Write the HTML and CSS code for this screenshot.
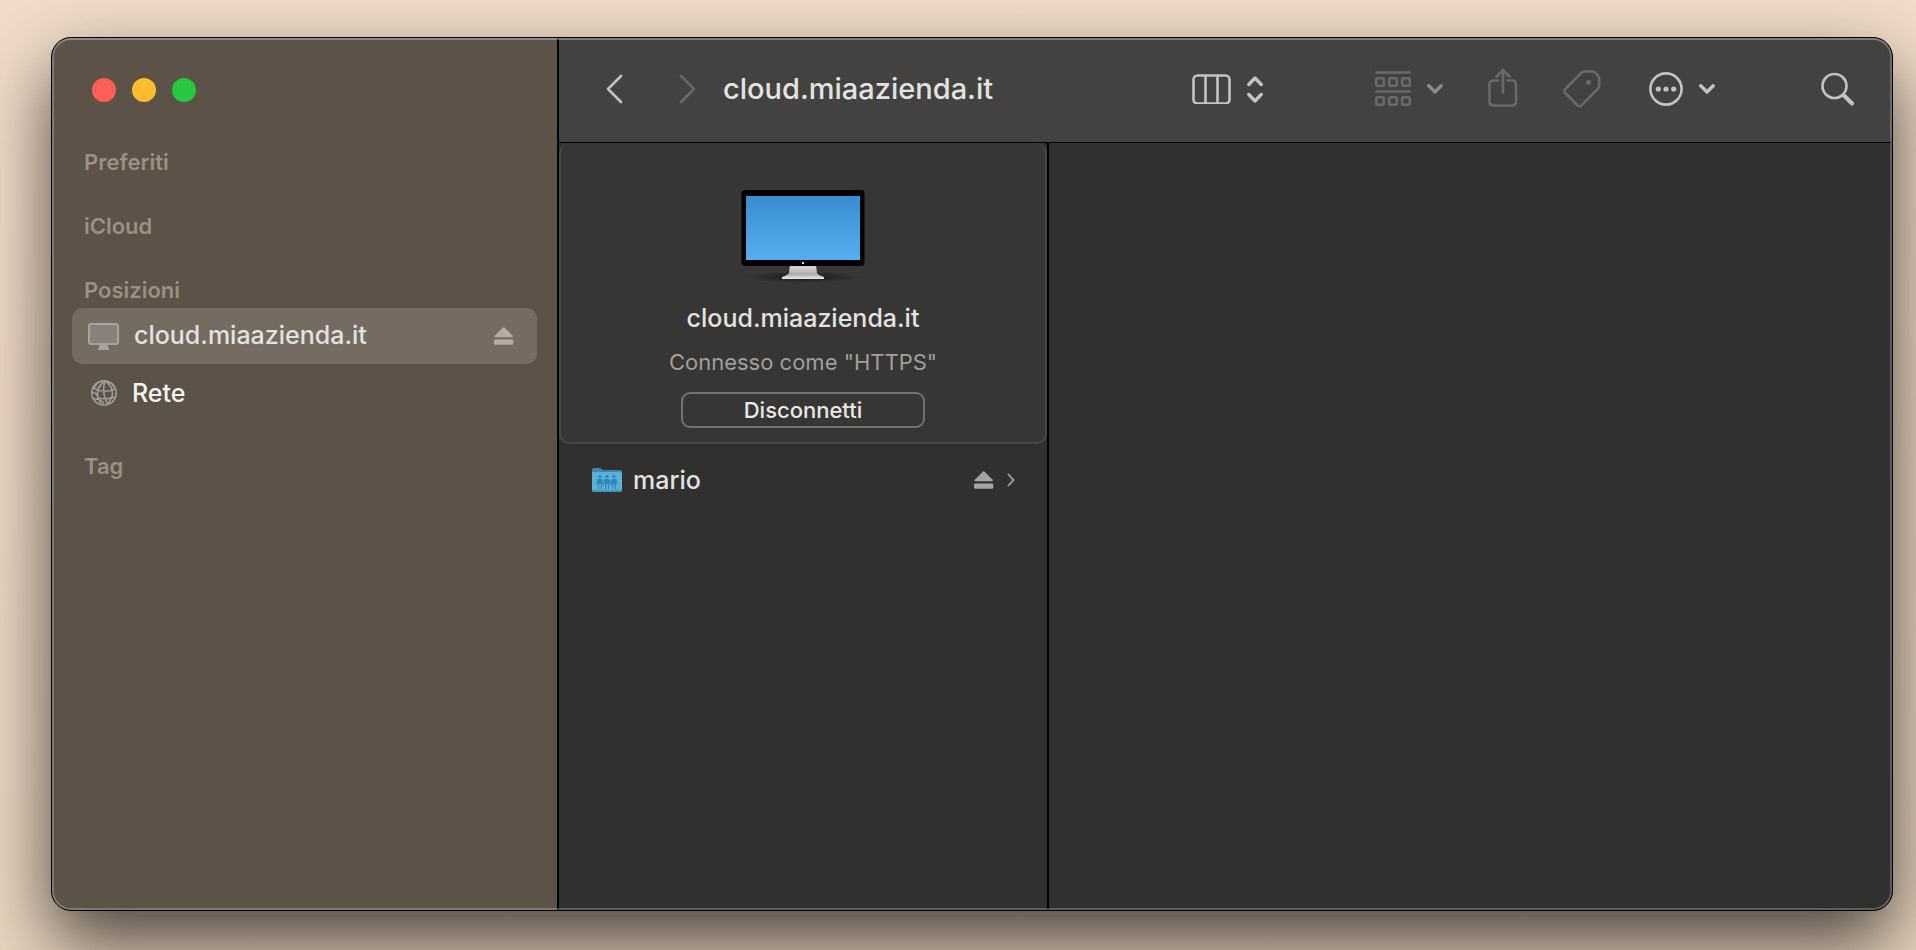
FILE: index.html
```html
<!DOCTYPE html>
<html lang="it">
<head>
<meta charset="utf-8">
<title>cloud.miaazienda.it</title>
<link rel="stylesheet" href="styles.css">
</head>
<body>
<div class="window">
  <aside class="sidebar">
    <div class="lights">
      <button class="light light-close" aria-label="Chiudi"></button>
      <button class="light light-min" aria-label="Riduci"></button>
      <button class="light light-zoom" aria-label="Ingrandisci"></button>
    </div>
    <nav class="nav">
      <h2 class="section">Preferiti</h2>
      <h2 class="section">iCloud</h2>
      <h2 class="section section-open">Posizioni</h2>
      <div class="place place-active">
        <svg class="place-icon" width="32" height="28" viewBox="0 0 32 28">
          <rect x="1" y="2" width="29" height="20" rx="2" fill="#87817a" stroke="#a5a4a1" stroke-width="2"/>
          <path d="M11 23h9v3h1v2H10v-2h1z" fill="#a5a4a1"/>
        </svg>
        <a class="place-link" href="#cloud">cloud.miaazienda.it</a>
        <button class="icon-button" aria-label="Espelli">
          <svg width="20" height="20" viewBox="0 0 20 20" fill="#b8aca0"><path d="M8.700 1.700q1-1 2 0l8 8q.8 1.600-.8 1.600H1.500q-1.600 0-.8-1.600z"/><rect x="0" y="13.500" width="19.300" height="5.300" rx="1.300"/></svg>
        </button>
      </div>
      <div class="place">
        <svg class="place-icon" width="32" height="28" viewBox="0 0 32 28" fill="none" stroke="#a09b96" stroke-width="1.600">
          <circle cx="16" cy="14" r="12.200"/>
          <path d="M17 2Q9 7 9.500 16q.5 5 4 9.500M17 2q-3 10 .5 18 1.500 3.500 2 5M17 2q8 5 7.500 13-.5 5-5 10M20 2.500q5 2 6 6M14 2Q8 4 6 9M5 9q11 6 22 1M4 13q5 1 6 6 8 2 17-1M6 20q8 0 10 5"/>
        </svg>
        <a class="place-link place-strong" href="#rete">Rete</a>
      </div>
      <h2 class="section section-tag">Tag</h2>
    </nav>
  </aside>
  <main class="main">
    <header class="toolbar">
      <button class="icon-button" aria-label="Indietro"><svg width="18" height="30" viewBox="0 0 18 30"><path d="M15 2 2 15l13 13" class="ln ln-on"/></svg></button>
      <button class="icon-button forward" aria-label="Avanti" disabled><svg width="18" height="30" viewBox="0 0 18 30"><path d="M2 2l13 13L2 28" class="ln ln-off"/></svg></button>
      <h1 class="title">cloud.miaazienda.it</h1>
      <button class="icon-button tool" aria-label="Vista">
        <svg width="39" height="30" viewBox="0 0 39 30" class="ln ln-on"><rect x="1.500" y="1.500" width="36" height="28" rx="4"/><path d="M13.500 2v27M25.500 2v27"/></svg>
        <svg width="16" height="27" viewBox="0 0 16 27" class="ln ln-on ln-thick"><path d="M1.800 8.500 8 2l6.200 6.500M1.800 18.500 8 25l6.200-6.500"/></svg>
      </button>
      <button class="icon-button tool tool-group" aria-label="Raggruppa" disabled>
        <svg width="36" height="36" viewBox="0 0 36 36" class="ln ln-off"><path d="M1.500 1.500h33M1.500 20.500h33"/><rect x="1.200" y="7.200" width="7.600" height="7.600" rx="1.500"/><rect x="14.200" y="7.200" width="7.600" height="7.600" rx="1.500"/><rect x="27.200" y="7.200" width="7.600" height="7.600" rx="1.500"/><rect x="1.200" y="26.200" width="7.600" height="7.600" rx="1.500"/><rect x="14.200" y="26.200" width="7.600" height="7.600" rx="1.500"/><rect x="27.200" y="26.200" width="7.600" height="7.600" rx="1.500"/></svg>
        <svg width="16" height="10" viewBox="0 0 16 10" class="ln ln-mid ln-thick"><path d="M1.800 1.800 8 8l6.200-6.200"/></svg>
      </button>
      <button class="icon-button tool-share" aria-label="Condividi" disabled>
        <svg width="30" height="42" viewBox="0 0 30 42" class="ln ln-off"><path d="M10 12.500H5.500q-4 0-4 4v17q0 4 4 4h18.500q4 0 4-4v-17q0-4-4-4h-4.500M15 24.500V2.500M8.500 8.500l6.500-6.500 6.500 6.500"/></svg>
      </button>
      <button class="icon-button tool-tag" aria-label="Tag" disabled>
        <svg width="38" height="38" viewBox="0 0 38 38" class="ln ln-off"><path d="M21.500 1.500h8q2 0 3.200 1.500l2.300 2.600q1.200 1.400 1.200 3.200v6.700q0 2-1.400 3.400L18.500 35.300q-2 2-4 0L2.300 23q-2-2 0-4L18.500 2.700q1.200-1.200 3-1.200z"/><circle cx="25.500" cy="12.500" r="1.200"/></svg>
      </button>
      <button class="icon-button tool tool-more" aria-label="Altro">
        <svg width="34" height="34" viewBox="0 0 34 34" class="ln ln-on"><circle cx="17" cy="17" r="15.600"/><g fill="#c4c3c1" stroke="none"><circle cx="9.300" cy="17" r="2.600"/><circle cx="17" cy="17" r="2.600"/><circle cx="24.700" cy="17" r="2.600"/></g></svg>
        <svg width="16" height="10" viewBox="0 0 16 10" class="ln ln-on ln-thick"><path d="M1.800 1.800 8 8l6.200-6.200"/></svg>
      </button>
      <button class="icon-button tool-search" aria-label="Cerca">
        <svg width="34" height="34" viewBox="0 0 34 34" class="ln ln-on"><circle cx="13.500" cy="14" r="12"/><path class="ln-handle" d="M22.500 23 31 31.500"/></svg>
      </button>
    </header>
    <div class="columns">
      <section class="column">
        <div class="server">
          <svg class="display" width="128" height="96" viewBox="0 0 128 96">
            <defs>
              <linearGradient id="screen" x2="0" y2="1"><stop stop-color="#398dce"/><stop offset="1" stop-color="#58adee"/></linearGradient>
              <linearGradient id="stand" x2="0" y2="1"><stop stop-color="#c2c2bf"/><stop offset=".2" stop-color="#d5d5d2"/><stop offset=".65" stop-color="#a9a9a7"/><stop offset="1" stop-color="#e9e9e6"/></linearGradient>
              <radialGradient id="shade"><stop stop-color="#171716"/><stop offset="1" stop-color="#171716" stop-opacity="0"/></radialGradient>
            </defs>
            <ellipse cx="64" cy="90" rx="58" ry="6" fill="url(#shade)"/>
            <path d="M51 78h26l1 8q1 2 7 4v2H43v-2q6-2 7-4z" fill="url(#stand)"/>
            <rect x="2.500" y="3" width="123" height="76" rx="4" fill="#000"/>
            <rect x="7" y="9" width="114" height="64" fill="url(#screen)"/>
            <rect x="63" y="75" width="2" height="2" fill="#ddd"/>
          </svg>
          <div class="server-name">cloud.miaazienda.it</div>
          <div class="server-status">Connesso come "HTTPS"</div>
          <button class="disconnect">Disconnetti</button>
        </div>
        <div class="file">
          <svg width="30" height="24" viewBox="0 0 30 24">
            <path d="M0 2q0-2 2-2h6l3 2h17q2 0 2 2v6H0z" fill="#3c88ad"/>
            <path d="M0 5q0-1 1-1h28q1 0 1 1v17q0 2-2 2H2q-2 0-2-2z" fill="#5bb0da"/>
            <path d="M0 22q0 2 2 2h26q2 0 2-2z" fill="#4794ba"/>
            <g fill="#2f84ba">
              <circle cx="8" cy="8.500" r="1.600"/><circle cx="15" cy="8.500" r="1.600"/><circle cx="22" cy="8.500" r="1.600"/>
              <path d="M6 11h4v5H6zM13 11h4v5h-4zM20 11h4v5h-4z"/>
            </g>
            <path d="M6.600 15v6M9.400 15v6M13.600 15v6M16.400 15v6M20.600 15v6M23.400 15v6M6 11.500l-1.500 5M24 11.500l1.500 5M10 11.500l1.500 5 1.500-5M17 11.500l1.500 5 1.500-5" fill="none" stroke="#2f84ba" stroke-width="1.100"/>
          </svg>
          <a class="file-name" href="#mario">mario</a>
          <button class="icon-button" aria-label="Espelli mario">
            <svg width="20" height="20" viewBox="0 0 20 20" fill="#a3a3a1"><path d="M8.700 1.700q1-1 2 0l8 8q.8 1.600-.8 1.600H1.500q-1.600 0-.8-1.600z"/><rect x="0" y="13.500" width="19.300" height="5.300" rx="1.300"/></svg>
          </button>
          <svg class="file-more" width="8" height="14" viewBox="0 0 8 14" fill="none" stroke="#a3a3a1" stroke-width="1.800"><path d="M1 1l5.500 6L1 13"/></svg>
        </div>
      </section>
      <section class="preview"></section>
    </div>
  </main>
</div>
</body>
</html>
```
FILE: styles.css
```css
* { box-sizing: border-box; }

body {
  display: flex;
  min-height: 100vh;
  margin: 0;
  padding: 37px 23px 39px 51px;
  overflow: hidden;
  background: linear-gradient(#f2dcc9, #ead6c0);
  font-family: Inter, "Liberation Sans", sans-serif;
  color: #e2e2e1;
}

h1, h2 { margin: 0; }
a { color: inherit; text-decoration: none; }

.window {
  position: relative;
  display: flex;
  flex: 1;
  overflow: hidden;
  border: 1px solid #000;
  border-radius: 20px;
  background: #32302e;
  box-shadow: 0 32px 72px rgba(0, 0, 0, .68);
}

/* light rim drawn over the panes */
.window::after {
  content: "";
  position: absolute;
  inset: 0;
  border: 2px solid rgba(255, 255, 255, .22);
  border-top-color: rgba(255, 255, 255, .32);
  border-radius: 19px;
  pointer-events: none;
}

.sidebar {
  flex: 0 0 507px;
  border-right: 2px solid #000;
  background: #5d5247;
}

.lights {
  display: flex;
  gap: 16px;
  padding: 40px 0 0 40px;
}

.light {
  width: 24px;
  height: 24px;
  padding: 0;
  border: 0;
  border-radius: 50%;
}

.light-close { background: #ff5f57; }
.light-min { background: #fbbc2e; }
.light-zoom { background: #25c83f; }

.nav { padding: 44px 20px 0; }

.section {
  height: 64px;
  padding-left: 12px;
  font-size: 22px;
  font-weight: 600;
  line-height: 32px;
  color: #9c9084;
}

.section-open { height: 34px; }
.section-tag { margin-top: 29px; }

.place {
  display: flex;
  align-items: center;
  height: 56px;
  margin-bottom: 1px;
  padding: 0 23px 0 16px;
  border-radius: 10px;
}

.place-active { background: #756b60; }

.place-icon { margin-right: 12px; }

.place-link {
  flex: 1;
  font-size: 25px;
  line-height: 32px;
}

.place-active .place-link {
  padding: 0 0 2px 2px;
  font-weight: 500;
}

.place-strong {
  font-weight: 500;
  color: #f5f4f3;
}

.icon-button {
  display: flex;
  align-items: center;
  padding: 0;
  border: 0;
  background: none;
}

.main {
  display: flex;
  flex: 1;
  flex-direction: column;
  min-width: 0;
}

.toolbar {
  display: flex;
  align-items: center;
  height: 105px;
  padding: 0 37px 2px 47px;
  border-bottom: 1px solid #000;
  background: #434240;
}

.forward { margin-left: 55px; }

.title {
  flex: 1;
  margin-left: 26px;
  font-size: 29px;
  font-weight: 500;
  line-height: 36px;
}

.tool { gap: 16px; }
.tool-group { margin-left: 112px; }
.tool-share { margin-left: 45px; }
.tool-tag { margin-left: 45px; }
.tool-more { margin-left: 48px; }
.tool-search { margin-left: 106px; }

.ln {
  fill: none;
  stroke-width: 2.6px;
  stroke-linecap: round;
  stroke-linejoin: round;
}

.ln-on { stroke: #c4c3c1; }
.ln-mid { stroke: #8b8a88; }
.ln-off { stroke: #6a6967; }
.ln-thick { stroke-width: 3.4px; }
.ln-handle { stroke-width: 4px; }

.columns {
  display: flex;
  flex: 1;
}

.column {
  flex: 0 0 490px;
  border-right: 2px solid #000;
}

.server {
  display: flex;
  flex-direction: column;
  align-items: center;
  height: 301px;
  padding-top: 44px;
  border: 2px solid #4a4947;
  border-top-width: 0;
  border-radius: 10px;
  background: #383634;
}

.server-name {
  margin-top: 19px;
  font-size: 25px;
  font-weight: 500;
  line-height: 32px;
}

.server-status {
  margin-top: 14px;
  font-size: 22px;
  line-height: 28px;
  color: #a09f9d;
}

.disconnect {
  width: 244px;
  height: 36px;
  margin-top: 16px;
  padding: 0;
  border: 2px solid #737270;
  border-radius: 9px;
  background: none;
  font: 500 22px/32px Inter, "Liberation Sans", sans-serif;
  color: #e8e8e7;
}

.file {
  display: flex;
  align-items: center;
  height: 71px;
  padding: 0 32px 0 33px;
}

.file-name {
  flex: 1;
  margin-left: 11px;
  font-size: 25px;
  font-weight: 500;
  line-height: 32px;
}

.file-more { margin-left: 13px; }

.preview { flex: 1; }
```
